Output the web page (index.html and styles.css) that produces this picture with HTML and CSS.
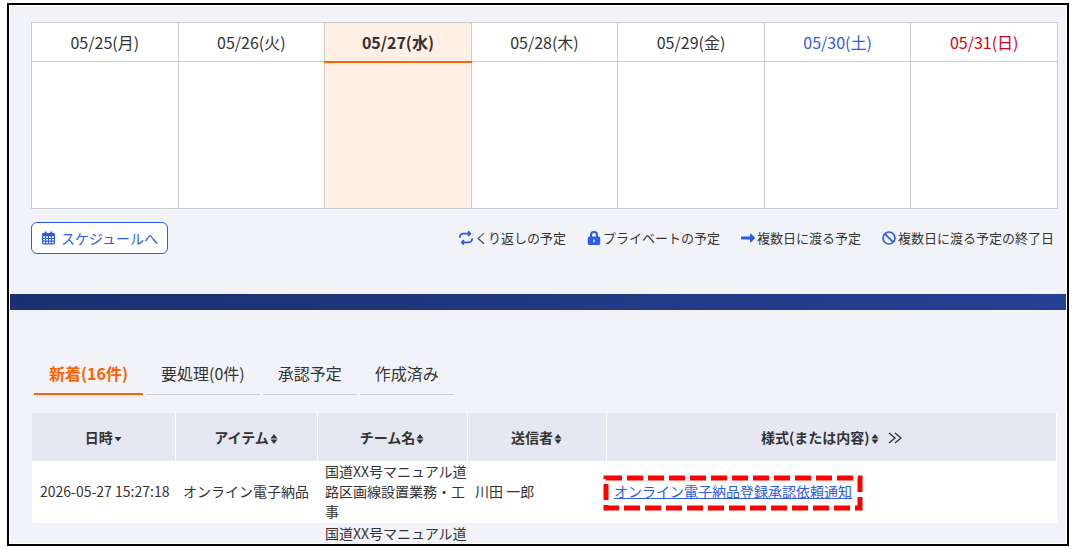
FILE: index.html
```html
<!DOCTYPE html>
<html lang="ja">
<head>
<meta charset="utf-8">
<title>スケジュール</title>
<link rel="stylesheet" href="styles.css">
</head>
<body>
<svg class="symbols" aria-hidden="true">
  <symbol id="sort" viewBox="0 0 8 12"><path d="M4 1 7.500 5.500H.5zM4 11 .5 6.500h7z"/></symbol>
</svg>
<div class="frame">
  <section class="schedule">
    <table class="week">
      <thead>
        <tr><th>05/25(月)</th><th>05/26(火)</th><th class="today">05/27(水)</th><th>05/28(木)</th><th>05/29(金)</th><th class="sat">05/30(土)</th><th class="sun">05/31(日)</th></tr>
      </thead>
      <tbody>
        <tr><td></td><td></td><td class="today"></td><td></td><td></td><td></td><td></td></tr>
      </tbody>
    </table>
    <div class="toolbar">
      <button class="go" type="button">
        <svg class="icon" viewBox="0 0 14 14" aria-hidden="true"><path fill-rule="evenodd" d="M2.800 0h2.200v1.500h4V0h2.200v1.500h1.300A1.500 1.500 0 0 1 14 3v9.500A1.500 1.500 0 0 1 12.500 14h-11A1.500 1.500 0 0 1 0 12.500V3a1.500 1.500 0 0 1 1.500-1.500h1.300zM1.300 5.200v1.700h2V5.200zm3.100 0v1.700h2V5.200zm3.200 0v1.700h2V5.200zm3.100 0v1.700h2V5.200zM1.300 8.100v1.700h2V8.100zm3.100 0v1.700h2V8.100zm3.200 0v1.700h2V8.100zm3.100 0v1.700h2V8.100zM1.300 11v1.700h2V11zm3.100 0v1.700h2V11zm3.200 0v1.700h2V11zm3.100 0v1.700h2V11z"/></svg>
        スケジュールへ
      </button>
      <ul class="legend">
        <li><svg class="icon" viewBox="0 0 512 512" aria-hidden="true"><path d="M0 224c0 17.700 14.300 32 32 32s32-14.300 32-32c0-53 43-96 96-96H320v32c0 12.900 7.800 24.600 19.800 29.600s25.700 2.200 34.900-6.900l64-64c12.500-12.500 12.500-32.800 0-45.300l-64-64c-9.200-9.200-22.900-11.900-34.900-6.900S320 19.100 320 32V64H160C71.600 64 0 135.600 0 224zm512 64c0-17.700-14.300-32-32-32s-32 14.300-32 32c0 53-43 96-96 96H192V352c0-12.900-7.800-24.600-19.800-29.600s-25.700-2.200-34.900 6.900l-64 64c-12.500 12.500-12.500 32.800 0 45.300l64 64c9.200 9.200 22.900 11.900 34.900 6.900s19.800-16.600 19.800-29.600V448H352c88.400 0 160-71.600 160-160z"/></svg>くり返しの予定</li>
        <li><svg class="icon" viewBox="0 0 14 14" aria-hidden="true"><path fill-rule="evenodd" d="M3 5.500V4a4 4 0 0 1 8 0v1.500h.7A1.500 1.500 0 0 1 13.200 7v5.500A1.500 1.500 0 0 1 11.700 14H2.300A1.500 1.500 0 0 1 .8 12.500V7a1.500 1.500 0 0 1 1.500-1.500zm2 0h4V4a2 2 0 0 0-4 0zm1.300 3v2.800h1.400V8.500z"/></svg>プライベートの予定</li>
        <li><svg class="icon" viewBox="0 0 14 14" aria-hidden="true"><path d="M0 6.200a.8.8 0 0 1 .8-.8H9V3.200a.6.6 0 0 1 1-.4l3.800 3.700a.7.7 0 0 1 0 1L10 11.200a.6.6 0 0 1-1-.4V8.600H.8A.8.8 0 0 1 0 7.800z"/></svg>複数日に渡る予定</li>
        <li><svg class="icon" viewBox="0 0 14 14" aria-hidden="true"><g fill="none" stroke="currentColor" stroke-width="1.700"><circle cx="7" cy="7" r="6"/><path d="m2.800 2.800 8.400 8.400"/></g></svg>複数日に渡る予定の終了日</li>
      </ul>
    </div>
  </section>
  <div class="band"></div>
  <section class="inbox">
    <nav class="tabs">
      <a class="tab active" href="#new">新着(16件)</a>
      <a class="tab" href="#todo">要処理(0件)</a>
      <a class="tab" href="#approve">承認予定</a>
      <a class="tab" href="#created">作成済み</a>
    </nav>
    <table class="list" id="new">
      <colgroup><col class="c-date"><col class="c-item"><col class="c-team"><col class="c-sender"><col></colgroup>
      <thead>
        <tr>
          <th>日時<svg class="sort" viewBox="0 0 8 12" aria-hidden="true"><path d="M.5 4h7L4 8.500z"/></svg></th>
          <th>アイテム<svg class="sort" aria-hidden="true"><use href="#sort"/></svg></th>
          <th>チーム名<svg class="sort" aria-hidden="true"><use href="#sort"/></svg></th>
          <th>送信者<svg class="sort" aria-hidden="true"><use href="#sort"/></svg></th>
          <th>様式(または内容)<svg class="sort" aria-hidden="true"><use href="#sort"/></svg><svg class="more" viewBox="0 0 14 12" aria-hidden="true"><path d="m1 1 6 5-6 5M7 1l6 5-6 5"/></svg></th>
        </tr>
      </thead>
      <tbody>
        <tr>
          <td>2026-05-27 15:27:18</td>
          <td>オンライン電子納品</td>
          <td>国道XX号マニュアル道路区画線設置業務・工事</td>
          <td>川田 一郎</td>
          <td><span class="marked"><a href="#notice">オンライン電子納品登録承認依頼通知</a><svg class="marker" viewBox="0 0 260 36" aria-hidden="true"><path d="M3 3h254v30H3z"/></svg></span></td>
        </tr>
        <tr>
          <td></td>
          <td></td>
          <td>国道XX号マニュアル道</td>
          <td></td>
          <td></td>
        </tr>
      </tbody>
    </table>
  </section>
</div>
</body>
</html>
```
FILE: styles.css
```css
* { box-sizing: border-box; }
body {
  margin: 0;
  padding: 3px 12px 3px 7px;
  height: 100vh;
  background: #fff;
  color: #333;
  font: 14px/20px "Noto Sans CJK JP", sans-serif;
}
.symbols { display: none; }
.frame {
  height: 100%;
  padding: 1px;
  border: 2px solid #000;
  background: #f2f3f8 content-box;
  overflow: hidden;
}
table { width: 100%; border-collapse: collapse; table-layout: fixed; }
.schedule { padding: 16px 8px 40px 21px; }
.week th, .week td { border: 1px solid #ccc; background: #fff; padding: 0; }
.week th { height: 39px; font-size: 16px; font-weight: 400; }
.week td { height: 147px; }
.week .today { background: #ffefe4; }
.week th.today { font-weight: 700; border-bottom: 2px solid #ff6200; }
.week .sat { color: #2d5be3; }
.week .sun { color: #d0021b; }
.toolbar {
  display: flex;
  align-items: center;
  justify-content: space-between;
  margin-top: 13px;
}
.icon { width: 14px; height: 14px; fill: currentColor; flex: none; }
.go {
  display: flex;
  align-items: center;
  gap: 6px;
  height: 32px;
  padding: 0 9px 0 10px;
  border: 1px solid #2d5be3;
  border-radius: 6px;
  background: #fff;
  color: #2d5be3;
  font: inherit;
}
.go .icon { width: 13px; }
.legend {
  display: flex;
  gap: 21px;
  margin: 0;
  padding: 0 4px 0 0;
  list-style: none;
  font-size: 13px;
}
.legend li { display: flex; align-items: center; gap: 2px; }
.legend .icon { color: #2d5be3; }
.band { height: 16px; background: linear-gradient(90deg, #1b3070, #264193); }
.inbox { padding: 44px 9px 0 22px; }
.tabs { display: flex; gap: 3px; padding-left: 2px; margin-bottom: 18px; }
.tab {
  height: 41px;
  padding: 0 15px;
  border-bottom: 1px solid #ccc;
  color: #333;
  font-size: 16px;
  line-height: 38px;
  text-decoration: none;
}
.tab.active { border-bottom: 2px solid #ff6200; color: #ff6200; font-weight: 700; }
.c-date { width: 143px; }
.c-item { width: 142px; }
.c-team { width: 150px; }
.c-sender { width: 139px; }
.list th { height: 48px; padding: 0 0 1px; background: #e5e8f2; border-right: 1px solid #fff; }
.list td { padding: 0 0 2px 8px; }
.list tbody tr:nth-child(odd) { background: #fff; }
.sort { width: 8px; height: 12px; margin-left: 1px; fill: #333; vertical-align: -2px; }
.more { width: 14px; height: 12px; margin-left: 9px; fill: none; stroke: #333; stroke-width: 1.4; vertical-align: -1px; }
.list a { color: #2d5be3; }
.marked { position: relative; display: inline-block; }
.marker {
  position: absolute;
  top: -6px;
  left: -11px;
  width: 260px;
  height: 36px;
  fill: none;
  stroke: #f00;
  stroke-width: 5px;
  stroke-dasharray: 16 5;
  pointer-events: none;
}
```
